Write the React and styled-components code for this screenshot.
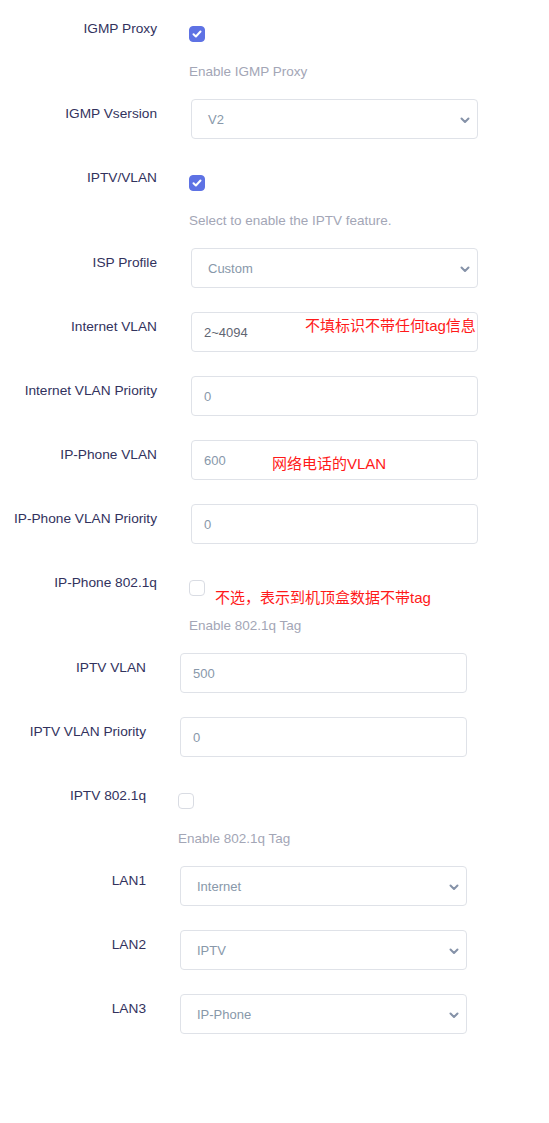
import * as React from "react";
import styled, { createGlobalStyle } from "styled-components";

// styles
const GlobalStyle = createGlobalStyle`
  body {
    margin: 0;
    background: #ffffff;
    font-family: "Liberation Sans", Arial, "Noto Sans CJK SC", sans-serif;
  }
`
const Page = styled.div`
  width: 549px;
  min-height: 1123px;
  padding-top: 14px;
  box-sizing: border-box;
`
const Section = styled.div`
  display: flex;
  flex-direction: column;
`
const Row = styled.div`
  display: grid;
  grid-template-columns: ${p => p.$labelWidth}px 287px;
  column-gap: 32px;
  padding-bottom: ${p => (p.$check ? 19 : 24)}px;
`
const Label = styled.div`
  text-align: right;
  font-size: 13.7px;
  line-height: 20px;
  padding-top: 5px;
  color: #32325d;
`
const Control = styled.div`
  position: relative;
  display: flex;
  flex-direction: column;
  align-items: flex-start;
`
const FieldBox = styled.div`
  position: relative;
  margin-left: 2px;
  width: 287px;
  height: 40px;
  box-sizing: border-box;
  border: 1px solid #dfe2e8;
  border-radius: 4px;
  background: #fff;
  display: flex;
  align-items: center;
  padding-left: ${p => (p.$select ? 16 : 12)}px;
  font-size: 13px;
  color: ${p => (p.$dark ? "#5f6572" : "#8898aa")};
`
const Chevron = styled.svg`
  position: absolute;
  right: 7px;
  top: 17px;
`
const Box = styled.div`
  margin-top: 12px;
  width: 16px;
  height: 16px;
  box-sizing: border-box;
  border-radius: 4px;
  border: 1px solid ${p => (p.$on ? "#5e72e4" : "#d9dce3")};
  background: ${p => (p.$on ? "#5e72e4" : "#fff")};
  display: flex;
  align-items: center;
  justify-content: center;
`
const Help = styled.div`
  margin-top: 22px;
  font-size: 13.5px;
  line-height: 16px;
  color: #a3a6b6;
`
const Note = styled.span`
  position: absolute;
  left: ${p => p.$x}px;
  top: ${p => p.$y}px;
  font-size: 15px;
  line-height: 20px;
  color: #ff1a1a;
  white-space: nowrap;
  font-family: "Liberation Sans", "Noto Sans CJK SC", sans-serif;
`

// parts
const Field = ({ value, select, dark, children }) => (
  <FieldBox $select={select} $dark={dark}>
    {value}
    {select && (
      <Chevron width="10" height="7" viewBox="0 0 10 7">
        <path d="M1.5 1.5l3.5 3.5 3.5-3.5" fill="none" stroke="#8592a8" strokeWidth="2" strokeLinecap="round" strokeLinejoin="round" />
      </Chevron>
    )}
    {children}
  </FieldBox>
)

const Check = ({ on }) => (
  <Box $on={on}>
    {on && (
      <svg width="10" height="8" viewBox="0 0 10 8">
        <path d="M1.5 4.2l2.4 2.3 4.6-5" fill="none" stroke="#fff" strokeWidth="2" strokeLinecap="round" strokeLinejoin="round" />
      </svg>
    )}
  </Box>
)

const InputRow = ({ w, label, ...rest }) => (
  <Row $labelWidth={w}>
    <Label>{label}</Label>
    <Control>
      <Field {...rest} />
    </Control>
  </Row>
)

const CheckRow = ({ w, label, on, help, children }) => (
  <Row $labelWidth={w} $check>
    <Label>{label}</Label>
    <Control>
      <Check on={on} />
      <Help>{help}</Help>
      {children}
    </Control>
  </Row>
)

// markup
const App = () => {
  return (
    <Page>
      <GlobalStyle />
      <Section>
        <CheckRow w={157} label="IGMP Proxy" on help="Enable IGMP Proxy" />
        <InputRow w={157} label="IGMP Vsersion" value="V2" select />
        <CheckRow w={157} label="IPTV/VLAN" on help="Select to enable the IPTV feature." />
        <InputRow w={157} label="ISP Profile" value="Custom" select />
        <InputRow w={157} label="Internet VLAN" value="2~4094" dark>
          <Note $x={113} $y={3}>不填标识不带任何tag信息</Note>
        </InputRow>
        <InputRow w={157} label="Internet VLAN Priority" value="0" />
        <InputRow w={157} label="IP-Phone VLAN" value="600">
          <Note $x={80} $y={13}>网络电话的VLAN</Note>
        </InputRow>
        <InputRow w={157} label="IP-Phone VLAN Priority" value="0" />
        <CheckRow w={157} label="IP-Phone 802.1q" help="Enable 802.1q Tag">
          <Note $x={26} $y={20}>不选，表示到机顶盒数据不带tag</Note>
        </CheckRow>
      </Section>
      <Section>
        <InputRow w={146} label="IPTV VLAN" value="500" />
        <InputRow w={146} label="IPTV VLAN Priority" value="0" />
        <CheckRow w={146} label="IPTV 802.1q" help="Enable 802.1q Tag" />
        <InputRow w={146} label="LAN1" value="Internet" select />
        <InputRow w={146} label="LAN2" value="IPTV" select />
        <InputRow w={146} label="LAN3" value="IP-Phone" select />
      </Section>
    </Page>
  )
}

export default App;
